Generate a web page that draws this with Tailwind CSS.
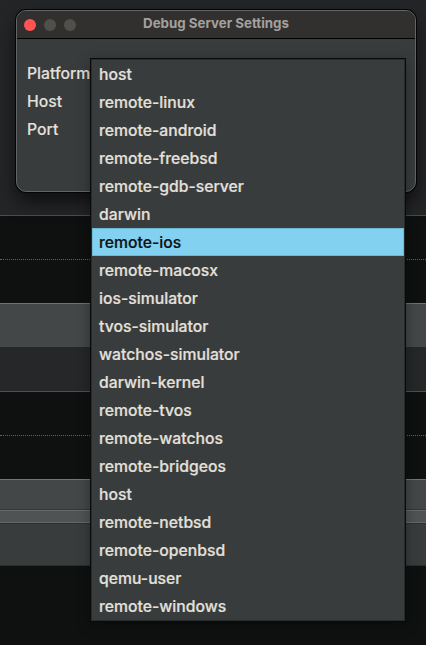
<!DOCTYPE html>
<html lang="en">
<head>
<meta charset="utf-8">
<title>Debug Server Settings</title>
<script src="https://cdn.jsdelivr.net/npm/@tailwindcss/browser@4"></script>
</head>
<body class="relative h-[645px] w-[426px] overflow-hidden bg-[#0f1110] font-['Inter','Liberation_Sans',sans-serif]">
<!-- Editor panels behind the dialog -->
<div class="flex h-[645px] flex-col">
  <div class="h-[216px] border-b border-[#4b4c4c] bg-[#242527]"></div>
  <div class="h-[44px] border-b border-dotted border-[#626463]"></div>
  <div class="h-[43px]"></div>
  <div class="h-[44px] border-t border-[#6f7271] bg-[#444748]"></div>
  <div class="h-[45px] border-b border-[#4f5151] bg-[#262729]"></div>
  <div class="h-[44px] border-b border-dotted border-[#626463]"></div>
  <div class="h-[43px]"></div>
  <div class="h-[31px] border-y border-t-[#727573] border-b-[#343738] bg-[#444748]"></div>
  <div class="h-[13px] border-y border-[#66696a] bg-[#505354]"></div>
  <div class="h-[43px] border-y border-t-[#2c2f2f] border-b-[#2a2d2c] bg-[#393c3d]"></div>
</div>
<!-- Dialog window -->
<section class="absolute left-4 top-[10px] h-[182px] w-[400px] overflow-hidden rounded-[10px] border border-[#626566] bg-[#393c3d] shadow-[0_0_0_1px_#050505,0_10px_18px_rgba(0,0,0,0.6)]">
  <header class="relative flex h-[28px] items-center border-b border-black bg-[#32302e] pl-[7px]">
    <div class="flex gap-2">
      <span class="size-3 rounded-full bg-[#ff5451]"></span>
      <span class="size-3 rounded-full bg-[#514f4c]"></span>
      <span class="size-3 rounded-full bg-[#514f4c]"></span>
    </div>
    <h1 class="absolute inset-x-0 top-0 text-center text-[13.3px] font-bold leading-[25px] text-[#a3a19f]">Debug Server Settings</h1>
  </header>
  <div class="flex flex-col pl-[10px] pt-[21px] text-[15.75px] font-medium leading-7 text-[#e4e0dc] [-webkit-text-stroke:0.1px]">
    <label>Platform</label><label>Host</label><label>Port</label>
  </div>
</section>
<!-- Platform menu -->
<ul class="absolute left-[90px] top-[58px] h-[564px] w-[316px] border border-[#090b0b] bg-[#393c3d] px-px pt-px text-[15.75px] font-medium leading-[30px] text-[#e4e0dc] shadow-[inset_0_0_0_1px_#292c2d,0_3px_12px_rgba(0,0,0,0.35)] [-webkit-text-stroke:0.2px] *:h-7 *:pl-[7px]">
  <li>host</li>
  <li>remote-linux</li>
  <li>remote-android</li>
  <li>remote-freebsd</li>
  <li>remote-gdb-server</li>
  <li>darwin</li>
  <li class="border border-[#6db8d4] bg-[#82d1f0] pl-[6px]! leading-[28px] text-[#0c1214]">remote-ios</li>
  <li>remote-macosx</li>
  <li>ios-simulator</li>
  <li>tvos-simulator</li>
  <li>watchos-simulator</li>
  <li>darwin-kernel</li>
  <li>remote-tvos</li>
  <li>remote-watchos</li>
  <li>remote-bridgeos</li>
  <li>host</li>
  <li>remote-netbsd</li>
  <li>remote-openbsd</li>
  <li>qemu-user</li>
  <li>remote-windows</li>
</ul>
</body>
</html>
